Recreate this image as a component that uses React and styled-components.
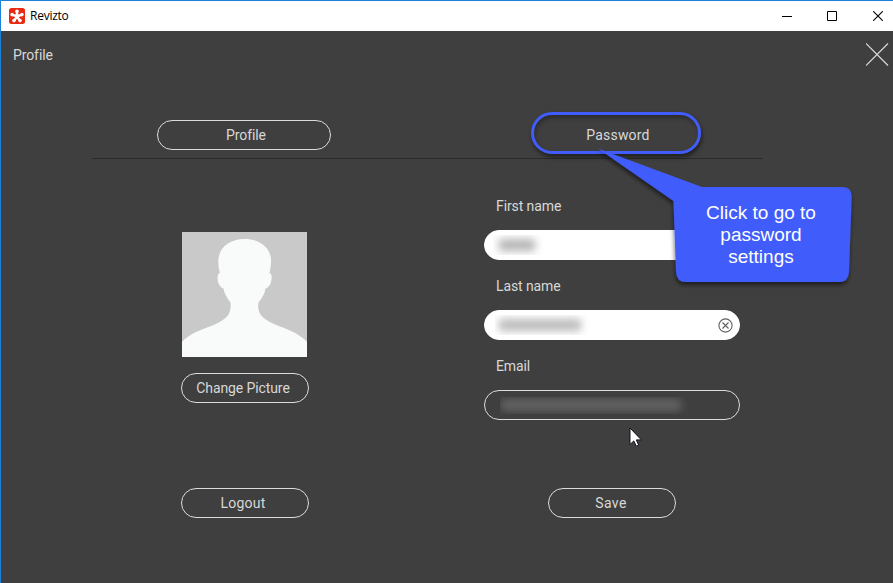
import React from 'react';
import styled, { createGlobalStyle } from 'styled-components';

const GlobalStyle = createGlobalStyle`
  *, *::before, *::after { box-sizing: border-box; }
  body { margin: 0; background: #3f3f3f; }
  button { margin: 0; padding: 0; background: none; border: 0; }
  svg { display: block; }
`;

const Window = styled.div`
  position: relative;
  display: flex;
  flex-direction: column;
  width: 893px;
  height: 583px;
  overflow: hidden;
  border-top: 1px solid #1a82d8;
  border-left: 1px solid #1a82d8;
  background: #3f3f3f;
  color: #d8d8d8;
  font: 14px/20px Roboto, sans-serif;
`;

const TitleBar = styled.header`
  display: flex;
  flex: none;
  align-items: center;
  height: 30px;
  padding-left: 8px;
  background: #fff;
`;

const AppName = styled.span`
  flex: 1;
  padding-left: 5px;
  color: #000;
  font: 12px/16px "Open Sans", sans-serif;
  letter-spacing: -0.25px;
`;

const WindowControls = styled.div`
  display: flex;
  margin-right: 10px;

  svg + svg { margin-left: 34px; }
  svg:last-child { margin-left: 36px; }
`;

const PageHeader = styled.div`
  display: flex;
  flex: none;
  align-items: center;
  justify-content: space-between;
  height: 48px;
  padding: 0 4px 0 12px;
`;

const PageTitle = styled.span`
  letter-spacing: -0.1px;
`;

const Content = styled.main`
  width: 671px;
  margin: 41px 0 0 91px;
`;

const Tabs = styled.nav`
  display: flex;
  align-items: flex-start;
  height: 39px;
  padding-left: 65px;
  border-bottom: 1px solid #2b2b2b;
`;

const PillButton = styled.button`
  display: flex;
  flex: none;
  align-items: center;
  justify-content: center;
  width: ${(p) => p.$width || 128}px;
  height: 30px;
  padding: 0 ${(p) => p.$right || 0}px 0 ${(p) => p.$left || 0}px;
  border: 1px solid #dcdcdc;
  border-radius: 15px;
  color: inherit;
  font: inherit;
  letter-spacing: ${(p) => p.$spacing || '-0.1px'};
`;

const HighlightedTab = styled.button`
  width: 170px;
  height: 42px;
  margin: -8px 0 0 200px;
  padding: 4px 0 0 4px;
  border: 3px solid #415cfb;
  border-radius: 21px;
  box-shadow: 1px 3px 4px rgba(0, 0, 0, 0.5), inset 1px 3px 4px rgba(0, 0, 0, 0.3);
  color: inherit;
  font: inherit;
  letter-spacing: 0.2px;
`;

const Columns = styled.div`
  display: flex;
  gap: 86px;
  height: 329px;
`;

const PictureColumn = styled.section`
  display: flex;
  flex-direction: column;
  align-items: center;
  width: 306px;
  padding-top: 73px;
`;

const AvatarFrame = styled.div`
  width: 125px;
  height: 125px;
  margin: 0 1px 16px 0;
  background: #c9c9c9;
`;

const FormColumn = styled.section`
  display: flex;
  flex-direction: column;
  width: 256px;
  padding-top: 37px;
`;

const FieldLabel = styled.label`
  padding-left: 12px;
  letter-spacing: -0.1px;
`;

const FieldBox = styled.div`
  display: flex;
  align-items: center;
  justify-content: space-between;
  height: 30px;
  margin: 14px 0 16px;
  padding: 0 6px 0 ${(p) => p.$inset}px;
  border: 1px solid ${(p) => (p.$outlined ? '#dcdcdc' : '#fff')};
  border-radius: 15px;
  background: ${(p) => (p.$outlined ? 'transparent' : '#fff')};
`;

const Redaction = styled.span`
  display: flex;
  align-items: center;
  width: ${(p) => p.$width}px;
  height: ${(p) => p.$height}px;
  padding-left: ${(p) => p.$pad || 4}px;
  overflow: hidden;
`;

const Smudge = styled.span`
  width: ${(p) => p.$width}px;
  height: 12px;
  background: ${(p) => p.$tone};
  filter: blur(4.5px);
`;

const Footer = styled.div`
  display: flex;
  gap: 239px;
  padding-left: 89px;
`;

const CalloutLayer = styled.div`
  position: absolute;
  top: 139px;
  left: 587px;
  width: 280px;
  height: 160px;
`;

const CalloutText = styled.p`
  position: absolute;
  top: 62px;
  left: 90px;
  width: 166px;
  margin: 0;
  color: #fff;
  font: 19px/22px "Liberation Sans", Arial, sans-serif;
  text-align: center;
`;

const Pointer = styled.svg`
  position: absolute;
  top: 426px;
  left: 628px;
`;

const Logo = () => (
  <svg width="16" height="16" viewBox="0 0 16 16">
    <rect width="16" height="16" rx="2.5" fill="#ea2a10" />
    <g stroke="#fff" strokeWidth="2.4" fill="#fff">
      <path d="M8 8.3V4M8 8.3 3.6 6.8M8 8.3l4.4-1.5M8 8.3l-2.6 4M8 8.3l2.6 4" />
      <circle cx="8" cy="8.3" r="1" />
    </g>
    <g fill="#fff">
      <circle cx="8" cy="3.2" r="1.8" />
      <circle cx="3.1" cy="6.6" r="1.8" />
      <circle cx="12.9" cy="6.6" r="1.8" />
      <circle cx="5" cy="12.6" r="1.8" />
      <circle cx="11" cy="12.6" r="1.8" />
    </g>
  </svg>
);

const Minimize = () => (
  <svg width="11" height="10"><path d="M0 5.5h10" stroke="#000" /></svg>
);
const Maximize = () => (
  <svg width="10" height="10"><path d="M.5.5h9v9h-9z" fill="none" stroke="#000" /></svg>
);
const CloseWindow = () => (
  <svg width="10" height="10"><path d="m.2.2 9.6 9.6M9.8.2.2 9.8" stroke="#000" strokeWidth="1.1" /></svg>
);
const ClosePage = () => (
  <svg width="23" height="24"><path d="m0 .5 22 22m0-22-22 22" stroke="#dcdcdc" strokeWidth="1.1" /></svg>
);
const Clear = () => (
  <svg width="15" height="15" fill="none" stroke="#606060" strokeWidth="1.1">
    <circle cx="7.5" cy="7.5" r="6.6" />
    <path d="m4.5 4.5 6 6m0-6-6 6" />
  </svg>
);

const Silhouette = () => (
  <svg width="125" height="125" viewBox="0 0 125 125">
    <path
      fill="#f9fbfa"
      d="M0 125V110C5 104 15 99 25 95.500C35 92 43 88 46.500 82.500C48.500 79 49 75 48.500 70.500C45 66 42 61 41.500 56.500C38 55.500 35.500 51 35.500 46C35.500 43 36.500 41 38 41C36.500 36 36 31 36.500 27C37.500 15 48 7 62.500 7C77.500 7 88 15 89 27C89.300 31 88.500 36 87.500 41C89.300 41.500 90 44 89.500 47C89 52 87 55.500 83.500 56.500C83 61 80 66 76.500 70.500C75.800 75 76.300 79 78.500 82.500C82 88 91 92 101 95.500C110 99 120 104 125 110V125Z"
    />
  </svg>
);

const CalloutShape = () => (
  <svg width="280" height="160" viewBox="588 140 280 160">
    <defs>
      <filter id="callout-shadow" x="-10%" y="-10%" width="120%" height="125%">
        <feDropShadow dx="-0.5" dy="3" stdDeviation="2" floodColor="#000" floodOpacity="0.55" />
      </filter>
    </defs>
    <path
      d="M598 148.500 702 187H842Q852 187 851.700 197L849 272Q848.500 282 839 282H686Q676.500 282 676 272L673.500 201Z"
      fill="#415cfb"
      filter="url(#callout-shadow)"
    />
  </svg>
);

export default function App() {
  return (
    <>
      <GlobalStyle />
      <Window>
        <TitleBar>
          <Logo />
          <AppName>Revizto</AppName>
          <WindowControls>
            <Minimize />
            <Maximize />
            <CloseWindow />
          </WindowControls>
        </TitleBar>
        <PageHeader>
          <PageTitle>Profile</PageTitle>
          <ClosePage />
        </PageHeader>
        <Content>
          <Tabs>
            <PillButton $width={174} $left={4}>Profile</PillButton>
            <HighlightedTab>Password</HighlightedTab>
          </Tabs>
          <Columns>
            <PictureColumn>
              <AvatarFrame><Silhouette /></AvatarFrame>
              <PillButton $right={4}>Change Picture</PillButton>
            </PictureColumn>
            <FormColumn>
              <FieldLabel>First name</FieldLabel>
              <FieldBox $inset={8}>
                <Redaction $width={54} $height={20} $pad={6}><Smudge $width={36} $tone="#b4b4b4" /></Redaction>
              </FieldBox>
              <FieldLabel>Last name</FieldLabel>
              <FieldBox $inset={10}>
                <Redaction $width={100} $height={20}><Smudge $width={82} $tone="#bababa" /></Redaction>
                <Clear />
              </FieldBox>
              <FieldLabel>Email</FieldLabel>
              <FieldBox $inset={15} $outlined>
                <Redaction $width={190} $height={17} $pad={1}><Smudge $width={180} $tone="#646464" /></Redaction>
              </FieldBox>
            </FormColumn>
          </Columns>
          <Footer>
            <PillButton $right={4} $spacing="0.25px">Logout</PillButton>
            <PillButton $right={2} $spacing="0.4px">Save</PillButton>
          </Footer>
        </Content>
        <CalloutLayer>
          <CalloutShape />
          <CalloutText>Click to go to<br />password<br />settings</CalloutText>
        </CalloutLayer>
        <Pointer width="14" height="21" viewBox="0 0 14 21">
          <path d="M1 1v16.500l3.800-3.600 2.500 5.300 2.400-1.100-2.400-5.200h5.100Z" fill="#fff" stroke="#10101c" />
        </Pointer>
      </Window>
    </>
  );
}
